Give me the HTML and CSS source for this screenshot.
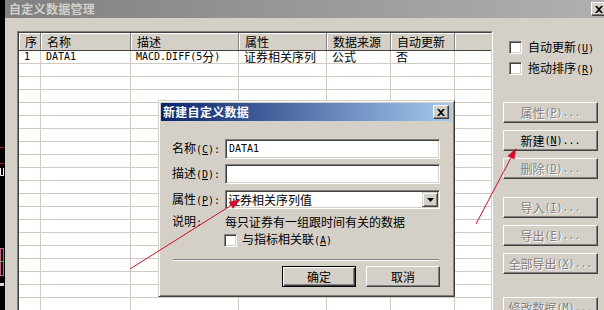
FILE: index.html
```html
<!DOCTYPE html>
<html>
<head>
<meta charset="utf-8">
<title>自定义数据管理</title>
<link rel="stylesheet" href="styles.css">
</head>
<body>
<div class="desk">
  <div class="strip">
    <svg width="5" height="310" viewBox="0 0 5 310">
      <line x1="0" y1="147.5" x2="4" y2="147.5" stroke="#c0182a" stroke-width="1"/>
      <line x1="0" y1="163.5" x2="4" y2="163.5" stroke="#c0182a" stroke-width="1"/>
      <path d="M0.5 168 V175.5 H3.5 V168" fill="none" stroke="#ffffff" stroke-width="1"/>
      <rect x="0.5" y="248.5" width="3" height="27" fill="none" stroke="#c86080" stroke-width="1"/>
      <line x1="0" y1="261.5" x2="3" y2="261.5" stroke="#60c060" stroke-width="1"/>
      <rect x="0" y="283" width="4" height="3" fill="#d8d8d8"/>
    </svg>
  </div>
  <div class="win">
    <div class="titlebar">
      <span class="title">自定义数据管理</span>
      <span class="xbtn"><svg width="8" height="7" viewBox="0 0 8 7"><path d="M0 0h2l2 2 2-2h2L5 3.5 8 7H6L4 5 2 7H0l3-3.5z" fill="#000"/></svg></span>
    </div>
    <div class="wbody">
      <div class="list">
        <div class="list-in">
          <div class="row head">
            <div class="c c1">序</div>
            <div class="c c2">名称</div>
            <div class="c c3">描述</div>
            <div class="c c4">属性</div>
            <div class="c c5">数据来源</div>
            <div class="c c6">自动更新</div>
            <div class="c c7"></div>
          </div>
          <div class="row">
            <div class="c c1"><span class="m">1</span></div>
            <div class="c c2"><span class="m">DATA1</span></div>
            <div class="c c3"><span class="m">MACD.DIFF(5</span>分<span class="m">)</span></div>
            <div class="c c4">证券相关序列</div>
            <div class="c c5">公式</div>
            <div class="c c6">否</div>
            <div class="c c7"></div>
          </div>
          <div class="row"><div class="c c1"></div><div class="c c2"></div><div class="c c3"></div><div class="c c4"></div><div class="c c5"></div><div class="c c6"></div><div class="c c7"></div></div>
          <div class="row"><div class="c c1"></div><div class="c c2"></div><div class="c c3"></div><div class="c c4"></div><div class="c c5"></div><div class="c c6"></div><div class="c c7"></div></div>
          <div class="row"><div class="c c1"></div><div class="c c2"></div><div class="c c3"></div><div class="c c4"></div><div class="c c5"></div><div class="c c6"></div><div class="c c7"></div></div>
          <div class="row"><div class="c c1"></div><div class="c c2"></div><div class="c c3"></div><div class="c c4"></div><div class="c c5"></div><div class="c c6"></div><div class="c c7"></div></div>
          <div class="row"><div class="c c1"></div><div class="c c2"></div><div class="c c3"></div><div class="c c4"></div><div class="c c5"></div><div class="c c6"></div><div class="c c7"></div></div>
          <div class="row"><div class="c c1"></div><div class="c c2"></div><div class="c c3"></div><div class="c c4"></div><div class="c c5"></div><div class="c c6"></div><div class="c c7"></div></div>
          <div class="row"><div class="c c1"></div><div class="c c2"></div><div class="c c3"></div><div class="c c4"></div><div class="c c5"></div><div class="c c6"></div><div class="c c7"></div></div>
          <div class="row"><div class="c c1"></div><div class="c c2"></div><div class="c c3"></div><div class="c c4"></div><div class="c c5"></div><div class="c c6"></div><div class="c c7"></div></div>
          <div class="row"><div class="c c1"></div><div class="c c2"></div><div class="c c3"></div><div class="c c4"></div><div class="c c5"></div><div class="c c6"></div><div class="c c7"></div></div>
          <div class="row"><div class="c c1"></div><div class="c c2"></div><div class="c c3"></div><div class="c c4"></div><div class="c c5"></div><div class="c c6"></div><div class="c c7"></div></div>
          <div class="row"><div class="c c1"></div><div class="c c2"></div><div class="c c3"></div><div class="c c4"></div><div class="c c5"></div><div class="c c6"></div><div class="c c7"></div></div>
          <div class="row"><div class="c c1"></div><div class="c c2"></div><div class="c c3"></div><div class="c c4"></div><div class="c c5"></div><div class="c c6"></div><div class="c c7"></div></div>
          <div class="row"><div class="c c1"></div><div class="c c2"></div><div class="c c3"></div><div class="c c4"></div><div class="c c5"></div><div class="c c6"></div><div class="c c7"></div></div>
          <div class="row"><div class="c c1"></div><div class="c c2"></div><div class="c c3"></div><div class="c c4"></div><div class="c c5"></div><div class="c c6"></div><div class="c c7"></div></div>
          <div class="row"><div class="c c1"></div><div class="c c2"></div><div class="c c3"></div><div class="c c4"></div><div class="c c5"></div><div class="c c6"></div><div class="c c7"></div></div>
          <div class="row"><div class="c c1"></div><div class="c c2"></div><div class="c c3"></div><div class="c c4"></div><div class="c c5"></div><div class="c c6"></div><div class="c c7"></div></div>
          <div class="row"><div class="c c1"></div><div class="c c2"></div><div class="c c3"></div><div class="c c4"></div><div class="c c5"></div><div class="c c6"></div><div class="c c7"></div></div>
          <div class="row"><div class="c c1"></div><div class="c c2"></div><div class="c c3"></div><div class="c c4"></div><div class="c c5"></div><div class="c c6"></div><div class="c c7"></div></div>
          <div class="row"><div class="c c1"></div><div class="c c2"></div><div class="c c3"></div><div class="c c4"></div><div class="c c5"></div><div class="c c6"></div><div class="c c7"></div></div>
        </div>
      </div>
      <div class="side">
        <div class="chk"><span class="box"></span><span>自动更新<span class="m">(<u>U</u>)</span></span></div>
        <div class="chk chk2"><span class="box"></span><span>拖动排序<span class="m">(<u>R</u>)</span></span></div>
        <div class="btn dis first">属性<span class="m">(<u>P</u>)...</span></div>
        <div class="btn">新建<span class="m">(<u>N</u>)...</span></div>
        <div class="btn dis">删除<span class="m">(<u>D</u>)...</span></div>
        <div class="btn dis grp">导入<span class="m">(<u>I</u>)...</span></div>
        <div class="btn dis">导出<span class="m">(<u>E</u>)...</span></div>
        <div class="btn dis">全部导出<span class="m">(<u>X</u>)...</span></div>
        <div class="btn dis last">修改数据<span class="m">(<u>M</u>)...</span></div>
      </div>
    </div>
  </div>
</div>

<div class="dlg">
  <div class="dtitle">
    <span class="dtext">新建自定义数据</span>
    <span class="xbtn dx"><svg width="8" height="7" viewBox="0 0 8 7"><path d="M0 0h2l2 2 2-2h2L5 3.5 8 7H6L4 5 2 7H0l3-3.5z" fill="#000"/></svg></span>
  </div>
  <div class="dform">
    <div class="frow"><span class="lbl">名称<span class="m">(<u>C</u>):</span></span><div class="field"><span class="m">DATA1</span></div></div>
    <div class="frow r2"><span class="lbl">描述<span class="m">(<u>D</u>):</span></span><div class="field"></div></div>
    <div class="frow r3"><span class="lbl">属性<span class="m">(<u>P</u>):</span></span><div class="field combo"><span class="ctext">证券相关序列值</span><span class="drop"><svg width="7" height="4" viewBox="0 0 7 4"><path d="M0 0h7L3.5 4z" fill="#000"/></svg></span></div></div>
    <div class="frow r4"><span class="lbl">说明<span class="m">:</span></span><span>每只证券有一组跟时间有关的数据</span></div>
    <div class="frow r5"><span class="lbl"></span><span class="box"></span><span class="cbt">与指标相关联<span class="m">(<u>A</u>)</span></span></div>
    <div class="sep"></div>
    <div class="dbtns">
      <div class="btn def">确定</div>
      <div class="btn">取消</div>
    </div>
  </div>
</div>

<svg class="arrows" width="604" height="310" viewBox="0 0 604 310">
  <line x1="130" y1="269" x2="231" y2="205.4" stroke="#c8102e" stroke-width="1"/>
  <polygon points="241,199 233,208.8 228.7,202" fill="#d0102e"/>
  <line x1="476" y1="224" x2="511" y2="157.7" stroke="#c8102e" stroke-width="1"/>
  <polygon points="516.5,148 514.4,159.6 507.4,155.9" fill="#d0102e"/>
</svg>
</body>
</html>
```

FILE: styles.css
```css
* { box-sizing: border-box; }
html, body { margin: 0; padding: 0; }
body {
  width: 604px;
  height: 310px;
  overflow: hidden;
  position: relative;
  background: #000;
  font-family: "Noto Sans CJK SC", sans-serif;
  font-size: 12px;
  line-height: 14px;
  color: #000;
}
.m { font-family: "DejaVu Sans Mono", "Liberation Mono", monospace; font-size: 10px; }
u { text-decoration: underline; text-underline-offset: 1px; }

.desk { display: flex; height: 310px; overflow: hidden; }
.strip { width: 5px; flex: none; background: #000; }
.strip svg { display: block; }

.win { flex: 1; min-width: 0; background: #d4d0c8; display: flex; flex-direction: column; overflow: hidden; }
.titlebar {
  height: 18px; flex: none;
  background: linear-gradient(to right, #808080, #b0b0b0);
  display: flex; align-items: center; justify-content: space-between;
  padding-left: 4px;
}
.title { color: #d4d0c8; font-weight: bold; line-height: 18px; letter-spacing: 0.3px; }
.xbtn {
  width: 16px; height: 14px; flex: none;
  background: #d4d0c8;
  border: 1px solid; border-color: #fff #404040 #404040 #fff;
  box-shadow: inset -1px -1px #808080;
  display: flex; align-items: center; justify-content: center;
  margin-right: -3px;
}
.xbtn svg { display: block; }

.wbody { flex: 1; display: flex; padding: 13px 0 0 12px; min-height: 0; overflow: hidden; }
.list {
  width: 476px; height: 281px; flex: none;
  border: 1px solid; border-color: #808080 #fff #fff #808080;
}
.list-in {
  height: 100%; overflow: hidden; background: #fff;
  border: 1px solid; border-color: #404040 #d4d0c8 #d4d0c8 #404040;
}
.row { display: flex; height: 13px; border-bottom: 1px solid #cfcbc3; }
.c {
  flex: none; height: 100%;
  border-right: 1px solid #cfcbc3;
  padding-left: 5px;
  white-space: nowrap;
  display: flex; align-items: center;
  line-height: 12px;
}
.c1 { width: 22px; }
.c2 { width: 90px; }
.c3 { width: 108px; }
.c4 { width: 88px; }
.c5 { width: 64px; }
.c6 { width: 64px; }
.c7 { flex: 1; border-right: none; }
.row.head { height: 18px; border-bottom: 1px solid #404040; background: #d4d0c8; }
.head .c {
  border-right: 1px solid #808080;
  box-shadow: inset 1px 1px #fff;
  padding-left: 6px;
}
.head .c7 { border-right: none; }

.side { width: 95px; margin-left: 10px; flex: none; display: flex; flex-direction: column; padding-top: 10px; }
.chk { display: flex; align-items: center; height: 13px; padding-left: 6px; gap: 6px; white-space: nowrap; }
.chk2 { margin-top: 8px; }
.box {
  width: 13px; height: 13px; flex: none; background: #fff;
  border: 1px solid; border-color: #808080 #fff #fff #808080;
  box-shadow: inset 1px 1px #404040, inset -1px -1px #d4d0c8;
}
.btn {
  height: 21px; flex: none;
  background: #d4d0c8;
  border: 1px solid; border-color: #fff #404040 #404040 #fff;
  box-shadow: inset -1px -1px #808080;
  display: flex; align-items: center; justify-content: center;
  white-space: nowrap; line-height: 14px;
}
.side .btn { margin-top: 7px; }
.side .btn.first { margin-top: 27px; }
.side .btn.grp { margin-top: 18px; }
.side .btn.last { margin-top: 23px; }
.btn.dis { color: #808080; text-shadow: 1px 1px 0 #fff; }

.dlg {
  position: absolute; left: 158px; top: 100px;
  width: 297px; height: 197px;
  background: #d4d0c8;
  border: 1px solid; border-color: #d4d0c8 #404040 #404040 #d4d0c8;
  box-shadow: inset 1px 1px #fff, inset -1px -1px #808080;
  padding: 2px;
  display: flex; flex-direction: column;
}
.dtitle {
  height: 18px; flex: none;
  background: linear-gradient(to right, #0a246a, #a6caf0);
  display: flex; align-items: center; justify-content: space-between;
  padding: 0 3px 0 2px;
}
.dtext { color: #fff; font-weight: bold; line-height: 18px; letter-spacing: 0.3px; }
.dx { margin-right: 0; }

.dform { padding: 18px 12px 0 11px; display: flex; flex-direction: column; }
.frow { display: flex; align-items: center; white-space: nowrap; }
.lbl { width: 53px; flex: none; }
.r2 { margin-top: 5px; }
.r3 { margin-top: 6px; }
.r4 { margin-top: 6px; height: 14px; }
.r5 { margin-top: 3px; }
.r5 .lbl { width: 52px; }
.cbt { margin-left: 5px; }
.field {
  width: 215px; height: 20px; flex: none;
  background: #fff;
  border: 1px solid; border-color: #808080 #fff #fff #808080;
  box-shadow: inset 1px 1px #404040, inset -1px -1px #d4d0c8;
  padding: 1px 1px 1px 3px;
  display: flex; align-items: center;
}
.combo { height: 19px; padding-left: 2px; justify-content: space-between; }
.ctext { line-height: 14px; }
.drop {
  width: 16px; height: 15px; flex: none;
  background: #d4d0c8;
  border: 1px solid; border-color: #d4d0c8 #404040 #404040 #d4d0c8;
  box-shadow: inset 1px 1px #fff, inset -1px -1px #808080;
  display: flex; align-items: center; justify-content: center;
}
.drop svg { display: block; }
.sep { height: 2px; border-top: 1px solid #808080; border-bottom: 1px solid #fff; margin: 11px 1px 0 1px; }
.dbtns { display: flex; justify-content: flex-end; gap: 10px; margin-top: 5px; }
.dbtns .btn { width: 74px; }
.btn.def {
  border: 1px solid #000;
  box-shadow: inset 1px 1px #fff, inset -1px -1px #404040, inset -2px -2px #808080;
}

.arrows { position: absolute; left: 0; top: 0; pointer-events: none; }
```
